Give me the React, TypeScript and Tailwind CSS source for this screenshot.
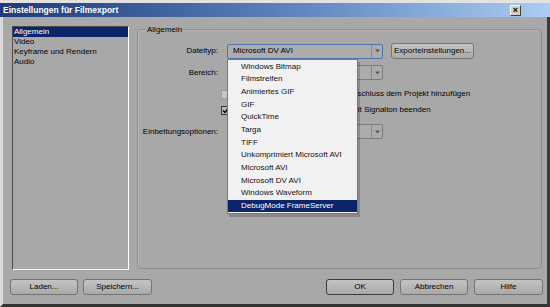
import React from "react";

const fileTypes = [
  "Windows Bitmap",
  "Filmstreifen",
  "Animiertes GIF",
  "GIF",
  "QuickTime",
  "Targa",
  "TIFF",
  "Unkomprimiert Microsoft AVI",
  "Microsoft AVI",
  "Microsoft DV AVI",
  "Windows Waveform",
  "DebugMode FrameServer",
];

const sections = ["Allgemein", "Video", "Keyframe und Rendern", "Audio"];

function Arrow() {
  return (
    <svg width="5" height="4" viewBox="0 0 5 4" className="block">
      <path d="M0 0.5h5L2.5 3.5z" fill="#5a5a5a" />
    </svg>
  );
}

function Combo({
  value,
  focused,
  children,
}: {
  value?: string;
  focused?: boolean;
  children?: React.ReactNode;
}) {
  return (
    <div
      className={`relative flex h-[15px] w-[156px] items-center rounded-[2px] border bg-[#acacac] ${
        focused ? "border-[#4f72ad]" : "border-[#7c7c7c]"
      }`}
    >
      <span className="flex-1 truncate pl-[5px]">{value}</span>
      <div className="flex h-full w-[11px] items-center justify-center border-l border-[#8a8a8a]">
        <Arrow />
      </div>
      {children}
    </div>
  );
}

function Btn({ label, def, w }: { label: string; def?: boolean; w: string }) {
  return (
    <button
      type="button"
      className={`flex h-[16px] items-center justify-center rounded-[3px] border bg-linear-to-b from-[#c4c4c4] to-[#a9a9a9] text-black ${w} ${
        def ? "border-[#3c3c3c]" : "border-[#747474]"
      }`}
    >
      {label}
    </button>
  );
}

export default function App() {
  return (
    <div className="flex h-[307px] w-[550px] flex-col overflow-hidden bg-[#a8a8a8] font-['Liberation_Sans',Arial,sans-serif] text-[8px] leading-none text-black">
      <div className="h-[3px] bg-[#e2e2e2]" />
      {/* title bar */}
      <div className="flex h-[14px] items-center bg-linear-to-r from-[#1c3b79] via-[#5a7fba] to-[#abcdf2] pl-[3px] pr-[29px]">
        <span className="flex-1 text-[8.5px] font-bold text-white">
          Einstellungen für Filmexport
        </span>
        <div className="flex h-[11px] w-[11px] items-center justify-center border border-[#f4f4f4] border-b-[#404040] border-r-[#404040] bg-[#d4d0c8] text-[9px] font-bold leading-none">
          ×
        </div>
      </div>

      {/* body */}
      <div className="flex flex-1 flex-col border-b-[3px] border-l-[3px] border-r-[3px] border-b-[#333] border-l-[#dadada] border-r-[#3a3a3a] pb-[9px] pl-[7px] pr-[4px] pt-[9px]">
        <div className="flex flex-1 pr-[1px]">
          {/* section list */}
          <div className="ml-[2px] h-[244px] w-[117px] border border-b-white border-l-[#4c4c4c] border-r-white border-t-[#4c4c4c]">
            {sections.map((s, i) => (
              <div
                key={s}
                className={`flex h-[10px] items-center pl-[1px] ${
                  i === 0 ? "bg-[#0c246a] text-white" : ""
                }`}
              >
                {s}
              </div>
            ))}
          </div>

          {/* group box */}
          <div className="relative ml-[8px] mt-[3px] h-[240px] flex-1 rounded-[4px] border border-[#8e8e8e] shadow-[inset_1px_1px_0_#b8b8b8]">
            <span className="absolute left-[8px] top-[-4px] bg-[#a8a8a8] px-[1px] leading-[8px]">
              Allgemein
            </span>

            <div className="flex flex-col pt-[13px]">
              <div className="flex items-center">
                <span className="w-[80px] text-right">Dateityp:</span>
                <div className="ml-[9px]">
                  <Combo value="Microsoft DV AVI" focused>
                    <div className="absolute left-[-1px] top-[14px] z-10 w-[131px] border border-[#7a7a7a] bg-[#f1f1f1] py-[1px] shadow-[2px_3px_0_rgba(0,0,0,0.18)]">
                      {fileTypes.map((t, i) => (
                        <div
                          key={t}
                          className={`flex h-[12.67px] items-center pl-[13px] ${
                            i === fileTypes.length - 1
                              ? "bg-[#0c246a] text-white"
                              : "text-[#111]"
                          }`}
                        >
                          {t}
                        </div>
                      ))}
                    </div>
                  </Combo>
                </div>
                <div className="ml-[8px]">
                  <Btn label="Exporteinstellungen..." w="w-[83px]" />
                </div>
              </div>

              <div className="mt-[6px] flex items-center">
                <span className="w-[80px] text-right">Bereich:</span>
                <div className="ml-[9px]">
                  <Combo />
                </div>
              </div>

              <div className="mt-[9px] flex h-[10px] items-center">
                <div className="ml-[83px] h-[9px] w-[9px] border border-[#9a9a9a] bg-[#c6c6c6]" />
                <span className="ml-[97px]">Nach Abschluss dem Projekt hinzufügen</span>
              </div>

              <div className="mt-[6px] flex h-[10px] items-center">
                <div className="ml-[83px] flex h-[9px] w-[9px] items-center justify-center border border-[#3a3a3a] bg-[#b8b8b8]">
                  <svg width="7" height="7" viewBox="0 0 7 7">
                    <path d="M1 3.5l2 2 3-4" stroke="#000" strokeWidth="1.4" fill="none" />
                  </svg>
                </div>
                <span className="ml-[121px]">Mit Signalton beenden</span>
              </div>

              <div className="mt-[9px] flex items-center">
                <span className="w-[80px] text-right">Einbettungsoptionen:</span>
                <div className="ml-[9px]">
                  <Combo />
                </div>
              </div>
            </div>
          </div>
        </div>

        {/* bottom buttons */}
        <div className="flex items-center pt-[9px]">
          <Btn label="Laden..." w="w-[68px]" />
          <div className="ml-[5px]">
            <Btn label="Speichern..." w="w-[69px]" />
          </div>
          <div className="flex-1" />
          <Btn label="OK" def w="w-[68px]" />
          <div className="ml-[6px]">
            <Btn label="Abbrechen" w="w-[68px]" />
          </div>
          <div className="ml-[6px]">
            <Btn label="Hilfe" w="w-[69px]" />
          </div>
        </div>
      </div>
    </div>
  );
}
